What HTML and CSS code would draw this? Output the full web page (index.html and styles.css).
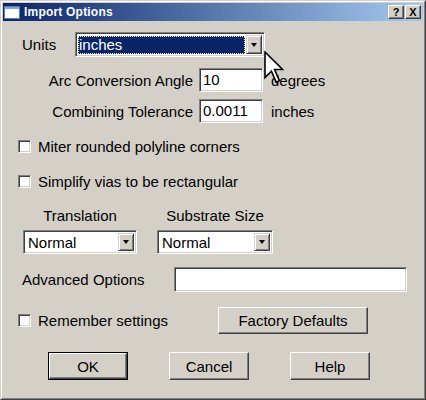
FILE: index.html
```html
<!DOCTYPE html>
<html lang="en">
<head>
    <meta charset="UTF-8">
    <meta name="viewport" content="width=device-width, initial-scale=1.0">
    <title>Import Options</title>
    <link rel="stylesheet" href="styles.css">
</head>
<body>
    <div class="window">
        <div class="frame">
            <div class="titlebar">
                <svg class="app-icon" width="16" height="13" viewBox="0 0 16 13">
                    <rect x="0.5" y="0.5" width="15" height="12" fill="#fff" stroke="#5a7fb8"/>
                    <rect x="1" y="1" width="14" height="2" fill="#7fa6dc"/>
                </svg>
                <span class="title">Import Options</span>
                <div class="caption-buttons">
                    <span class="cap-btn">?</span>
                    <span class="cap-btn">X</span>
                </div>
            </div>

            <div class="content">
                <div class="row units-row">
                    <span class="units-label">Units</span>
                    <div class="combo units-combo">
                        <span class="combo-value selected">inches</span>
                        <span class="drop-btn"><span class="arrow"></span></span>
                    </div>
                </div>

                <div class="row field-row first-field">
                    <span class="field-label">Arc Conversion Angle</span>
                    <span class="textbox short">10</span>
                    <span class="unit">degrees</span>
                </div>
                <div class="row field-row">
                    <span class="field-label">Combining Tolerance</span>
                    <span class="textbox short">0.0011</span>
                    <span class="unit">inches</span>
                </div>

                <div class="row check-row first-check">
                    <span class="checkbox"></span>
                    <span class="check-text">Miter rounded polyline corners</span>
                </div>
                <div class="row check-row second-check">
                    <span class="checkbox"></span>
                    <span class="check-text">Simplify vias to be rectangular</span>
                </div>

                <div class="row select-groups">
                    <div class="select-group translation">
                        <span class="group-label">Translation</span>
                        <div class="combo">
                            <span class="combo-value">Normal</span>
                            <span class="drop-btn"><span class="arrow"></span></span>
                        </div>
                    </div>
                    <div class="select-group substrate">
                        <span class="group-label">Substrate Size</span>
                        <div class="combo">
                            <span class="combo-value">Normal</span>
                            <span class="drop-btn"><span class="arrow"></span></span>
                        </div>
                    </div>
                </div>

                <div class="row advanced-row">
                    <span class="advanced-label">Advanced Options</span>
                    <span class="textbox wide"></span>
                </div>

                <div class="row remember-row">
                    <div class="remember">
                        <span class="checkbox"></span>
                        <span class="check-text">Remember settings</span>
                    </div>
                    <span class="button factory">Factory Defaults</span>
                </div>

                <div class="row button-row">
                    <span class="button default"><span>OK</span></span>
                    <span class="button">Cancel</span>
                    <span class="button">Help</span>
                </div>
            </div>
        </div>

        <svg class="cursor" width="20" height="34" viewBox="0 0 20 34">
            <path d="M1 1 L1 26.5 L7.4 20.1 L12.2 31.3 L15.4 29.7 L10.6 18.5 L18.6 18.5 Z"
                  fill="#fff" stroke="#000" stroke-width="1.6" stroke-linejoin="miter"/>
        </svg>
    </div>
</body>
</html>
```

FILE: styles.css
```css
body {
    margin: 0;
    background: #d4d0c8;
    font-family: "Liberation Sans", Arial, sans-serif;
    font-size: 15px;
    color: #000;
}
.window {
    position: relative;
    width: 426px;
    height: 400px;
    box-sizing: border-box;
    border: 1px solid;
    border-color: #d4d0c8 #404040 #404040 #d4d0c8;
    background: #d4d0c8;
}
.frame {
    height: 100%;
    box-sizing: border-box;
    border: 1px solid;
    border-color: #fff #808080 #808080 #fff;
    padding: 1px;
}

/* title bar */
.titlebar {
    display: flex;
    align-items: center;
    height: 18px;
    padding: 0 2px 0 1px;
    background: linear-gradient(to right, #0a246a, #a6caf0);
}
.app-icon {
    display: block;
    margin-right: 4px;
}
.title {
    color: #fff;
    font-weight: bold;
    font-size: 12px;
    letter-spacing: 0.2px;
}
.caption-buttons {
    margin-left: auto;
    display: flex;
    gap: 1px;
}
.cap-btn {
    width: 16px;
    height: 14px;
    box-sizing: border-box;
    border: 1px solid;
    border-color: #fff #404040 #404040 #fff;
    box-shadow: inset -1px -1px #808080;
    background: #d4d0c8;
    font-size: 11px;
    font-weight: bold;
    line-height: 12px;
    text-align: center;
}

/* content */
.content {
    padding: 11px 0 0 15px;
}
.row {
    display: flex;
    align-items: center;
}
.units-row {
    height: 25px;
}
.units-label {
    width: 53px;
    padding-left: 4px;
}
.combo {
    display: flex;
    height: 25px;
    box-sizing: border-box;
    border: 1px solid;
    border-color: #808080 #fff #fff #808080;
    box-shadow: inset 1px 1px #404040, inset -1px -1px #d4d0c8;
    background: #fff;
    padding: 2px;
}
.units-combo {
    width: 190px;
}
.combo-value {
    flex: 1;
    line-height: 19px;
    padding-left: 2px;
}
.combo-value.selected {
    margin: 1px 1px 0 0;
    line-height: 18px;
    height: 18px;
    padding-left: 1px;
    background: #0a246a;
    color: #fff;
    outline: 1px dotted #f0ecb0;
    outline-offset: -1px;
}
.drop-btn {
    width: 16px;
    box-sizing: border-box;
    border: 1px solid;
    border-color: #d4d0c8 #404040 #404040 #d4d0c8;
    box-shadow: inset 1px 1px #fff, inset -1px -1px #808080;
    background: #d4d0c8;
    display: flex;
    align-items: center;
    justify-content: center;
}
.arrow {
    width: 0;
    height: 0;
    border-left: 3.5px solid transparent;
    border-right: 3.5px solid transparent;
    border-top: 4px solid #000;
}

.field-row {
    height: 24px;
    margin-top: 7px;
}
.first-field {
    margin-top: 11px;
}
.field-label {
    width: 175px;
    text-align: right;
    margin-right: 6px;
}
.textbox {
    height: 24px;
    box-sizing: border-box;
    border: 1px solid;
    border-color: #808080 #fff #fff #808080;
    box-shadow: inset 1px 1px #404040, inset -1px -1px #d4d0c8;
    background: #fff;
    padding: 0 3px;
    line-height: 22px;
}
.textbox.short {
    width: 64px;
}
.textbox.wide {
    width: 233px;
    height: 25px;
}
.unit {
    margin-left: 8px;
}

.check-row {
    height: 13px;
}
.first-check {
    margin-top: 17px;
}
.second-check {
    margin-top: 22px;
}
.checkbox {
    width: 13px;
    height: 13px;
    box-sizing: border-box;
    border: 1px solid;
    border-color: #808080 #fff #fff #808080;
    box-shadow: inset 1px 1px #404040, inset -1px -1px #d4d0c8;
    background: #fff;
    flex: none;
}
.check-text {
    margin-left: 7px;
}

.select-groups {
    margin-top: 19px;
    align-items: flex-start;
    padding-left: 5px;
    gap: 20px;
}
.select-group {
    display: flex;
    flex-direction: column;
    align-items: center;
}
.group-label {
    line-height: 18px;
    margin-bottom: 5px;
}
.select-group .combo {
    height: 24px;
}
.translation .combo {
    width: 114px;
}
.substrate .combo {
    width: 116px;
}

.advanced-row {
    margin-top: 13px;
    height: 25px;
}
.advanced-label {
    width: 152px;
    padding-left: 4px;
}

.remember-row {
    margin-top: 15px;
    height: 27px;
}
.remember {
    display: flex;
    align-items: center;
    width: 200px;
}
.button {
    height: 27px;
    box-sizing: border-box;
    border: 1px solid;
    border-color: #fff #404040 #404040 #fff;
    box-shadow: inset -1px -1px #808080;
    background: #d4d0c8;
    display: flex;
    align-items: center;
    justify-content: center;
}
.factory {
    width: 150px;
}
.button-row {
    margin-top: 18px;
    padding-left: 30px;
    gap: 41px;
}
.button-row .button {
    width: 80px;
    height: 28px;
}
.button.default {
    border: 1px solid #000;
    box-shadow: none;
    padding: 0;
}
.button.default span {
    flex: 1;
    align-self: stretch;
    display: flex;
    align-items: center;
    justify-content: center;
    border: 1px solid;
    border-color: #fff #404040 #404040 #fff;
    box-shadow: inset -1px -1px #808080;
}

.cursor {
    position: absolute;
    left: 263px;
    top: 50px;
}
```
